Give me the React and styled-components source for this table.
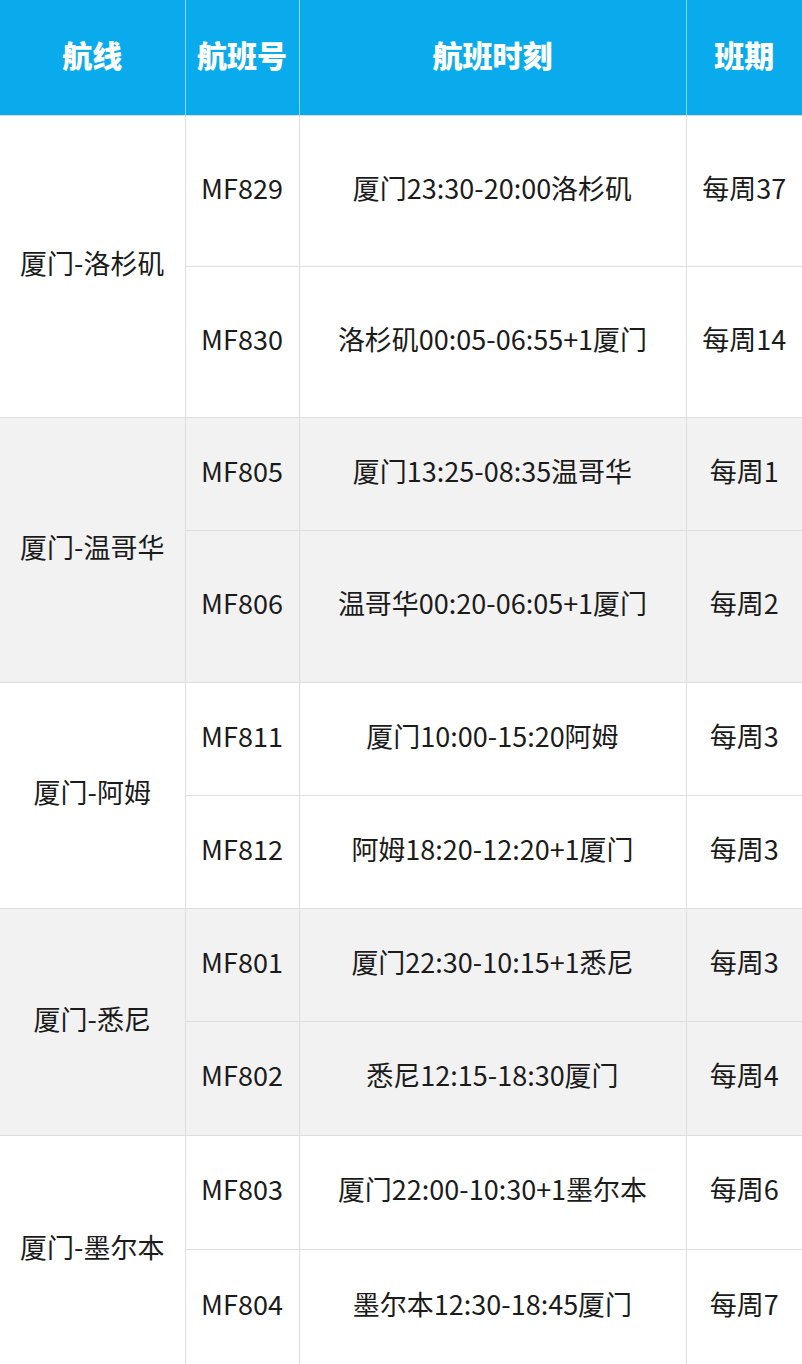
import React from 'react';
import styled, { createGlobalStyle } from 'styled-components';

const GlobalStyle = createGlobalStyle`
	html, body {
		margin: 0;
		padding: 0;
		background: #ffffff;
	}
	body {
		font-family: "Noto Sans CJK SC", "Noto Sans", sans-serif;
	}
`;

const Table = styled.table`
	width: 802px;
	height: 1364px;
	border-collapse: collapse;
	table-layout: fixed;
	color: #1b1b1b;
`;

const HeadRow = styled.tr`
	height: 115px;
	background: #0aabec;
`;

const HeadCell = styled.th`
	color: #ffffff;
	font-size: 30px;
	font-weight: 900;
	text-align: center;
	vertical-align: middle;
	padding: 0 0 6px;
	border-left: 1px solid #86d6f5;
	&:first-child {
		border-left: none;
	}
`;

const Row = styled.tr`
	height: ${(props) => props.h}px;
	background: ${(props) => (props.shaded ? '#f2f2f2' : '#ffffff')};
`;

const Cell = styled.td`
	font-size: 27px;
	text-align: center;
	vertical-align: middle;
	padding: 0 0 7px;
	border: 1px solid #dedede;
	white-space: nowrap;
	&:first-child {
		border-left: none;
	}
	&:last-child {
		border-right: none;
	}
`;

const groups = [
	{
		route: '厦门-洛杉矶',
		flights: [
			{ no: 'MF829', time: '厦门23:30-20:00洛杉矶', days: '每周37', h: 151 },
			{ no: 'MF830', time: '洛杉矶00:05-06:55+1厦门', days: '每周14', h: 151 }
		]
	},
	{
		route: '厦门-温哥华',
		flights: [
			{ no: 'MF805', time: '厦门13:25-08:35温哥华', days: '每周1', h: 113 },
			{ no: 'MF806', time: '温哥华00:20-06:05+1厦门', days: '每周2', h: 152 }
		]
	},
	{
		route: '厦门-阿姆',
		flights: [
			{ no: 'MF811', time: '厦门10:00-15:20阿姆', days: '每周3', h: 113 },
			{ no: 'MF812', time: '阿姆18:20-12:20+1厦门', days: '每周3', h: 113 }
		]
	},
	{
		route: '厦门-悉尼',
		flights: [
			{ no: 'MF801', time: '厦门22:30-10:15+1悉尼', days: '每周3', h: 113 },
			{ no: 'MF802', time: '悉尼12:15-18:30厦门', days: '每周4', h: 114 }
		]
	},
	{
		route: '厦门-墨尔本',
		flights: [
			{ no: 'MF803', time: '厦门22:00-10:30+1墨尔本', days: '每周6', h: 114 },
			{ no: 'MF804', time: '墨尔本12:30-18:45厦门', days: '每周7', h: 115 }
		]
	}
];

const App = () => (
	<>
		<GlobalStyle />
		<Table>
			<colgroup>
				<col style={{ width: 185 }} />
				<col style={{ width: 114 }} />
				<col style={{ width: 387 }} />
				<col style={{ width: 116 }} />
			</colgroup>
			<thead>
				<HeadRow>
					<HeadCell>航线</HeadCell>
					<HeadCell>航班号</HeadCell>
					<HeadCell>航班时刻</HeadCell>
					<HeadCell>班期</HeadCell>
				</HeadRow>
			</thead>
			<tbody>
				{groups.map((g, gi) =>
					g.flights.map((f, fi) => (
						<Row key={f.no} h={f.h} shaded={gi % 2 === 1}>
							{fi === 0 && <Cell rowSpan={g.flights.length}>{g.route}</Cell>}
							<Cell>{f.no}</Cell>
							<Cell>{f.time}</Cell>
							<Cell>{f.days}</Cell>
						</Row>
					))
				)}
			</tbody>
		</Table>
	</>
);

export default App;
